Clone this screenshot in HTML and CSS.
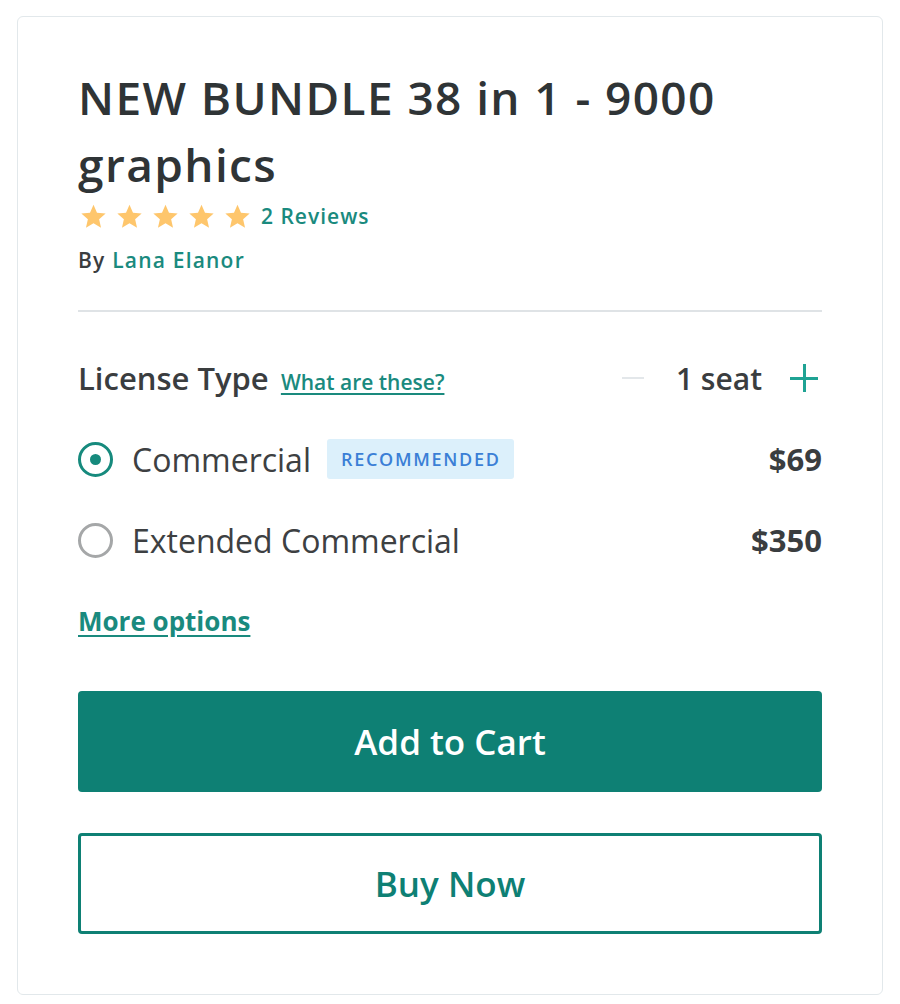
FILE: index.html
```html
<!DOCTYPE html>
<html lang="en">
<head>
    <meta charset="UTF-8">
    <title>NEW BUNDLE 38 in 1 - 9000 graphics</title>
    <link rel="stylesheet" href="styles.css">
</head>
<body>

<div class="product-card">
    <h1 class="title">NEW BUNDLE 38 in 1 - 9000 graphics</h1>

    <div class="rating">
        <div class="stars">
            <svg class="star" viewBox="0 0 24 24"><path d="M12 1.5l3.1 7.1 7.7.7-5.8 5.1 1.7 7.6L12 18l-6.7 4 1.7-7.6-5.8-5.1 7.7-.7z"/></svg>
            <svg class="star" viewBox="0 0 24 24"><path d="M12 1.5l3.1 7.1 7.7.7-5.8 5.1 1.7 7.6L12 18l-6.7 4 1.7-7.6-5.8-5.1 7.7-.7z"/></svg>
            <svg class="star" viewBox="0 0 24 24"><path d="M12 1.5l3.1 7.1 7.7.7-5.8 5.1 1.7 7.6L12 18l-6.7 4 1.7-7.6-5.8-5.1 7.7-.7z"/></svg>
            <svg class="star" viewBox="0 0 24 24"><path d="M12 1.5l3.1 7.1 7.7.7-5.8 5.1 1.7 7.6L12 18l-6.7 4 1.7-7.6-5.8-5.1 7.7-.7z"/></svg>
            <svg class="star" viewBox="0 0 24 24"><path d="M12 1.5l3.1 7.1 7.7.7-5.8 5.1 1.7 7.6L12 18l-6.7 4 1.7-7.6-5.8-5.1 7.7-.7z"/></svg>
        </div>
        <a class="reviews" href="#">2 Reviews</a>
    </div>

    <div class="author">By <a href="#">Lana Elanor</a></div>

    <hr class="divider">

    <div class="license-head">
        <div class="license-label">
            <span>License Type</span>
            <a href="#" class="help-link">What are these?</a>
        </div>
        <div class="seats">
            <span class="seat-btn minus"></span>
            <span class="seat-count">1 seat</span>
            <span class="seat-btn plus"></span>
        </div>
    </div>

    <label class="option">
        <span class="radio checked"></span>
        <span class="option-name">Commercial</span>
        <span class="badge">RECOMMENDED</span>
        <span class="price">$69</span>
    </label>

    <label class="option">
        <span class="radio"></span>
        <span class="option-name">Extended Commercial</span>
        <span class="price">$350</span>
    </label>

    <div class="more">
        <a href="#" class="more-options">More options</a>
    </div>

    <div class="actions">
        <button class="btn btn-cart">Add to Cart</button>
        <button class="btn btn-buy">Buy Now</button>
    </div>
</div>

</body>
</html>
```

FILE: styles.css
```css
body {
    margin: 0;
    background-color: #ffffff;
    font-family: "Open Sans", Lato, sans-serif;
    color: #333638;
}
a {
    color: #1a8a7e;
    text-decoration: none;
}
.product-card {
    margin: 16px 17px 0;
    height: 979px;
    box-sizing: border-box;
    padding: 47px 60px 0;
    border: 1px solid #e2e8eb;
    border-radius: 6px;
}
.title {
    margin: 0;
    font-size: 46px;
    font-weight: 600;
    line-height: 67px;
    letter-spacing: 1.4px;
    color: #2f3436;
}
.rating {
    display: flex;
    align-items: center;
    height: 36px;
}
.stars {
    display: flex;
    gap: 9px;
    margin-left: 2px;
}
.star {
    width: 27px;
    height: 27px;
    fill: #fec66c;
}
.reviews {
    margin-left: 10px;
    font-size: 21px;
    font-weight: 600;
    letter-spacing: 1px;
}
.author {
    margin-top: 13px;
    font-size: 21px;
    line-height: 26px;
    font-weight: 600;
    letter-spacing: 1.2px;
    color: #3a3d3f;
}
.divider {
    margin: 37px 0 0;
    border: none;
    border-top: 2px solid #dfe3e6;
}
.license-head {
    display: flex;
    justify-content: space-between;
    align-items: center;
    height: 48px;
    margin-top: 42px;
}
.license-label span {
    font-size: 31px;
    font-weight: 600;
    color: #3a3d3f;
}
.help-link {
    margin-left: 8px;
    font-size: 21px;
    font-weight: 600;
    text-decoration: underline;
    text-underline-offset: 3px;
}
.seats {
    display: flex;
    align-items: center;
    margin-right: 4px;
}
.seat-btn {
    position: relative;
    width: 28px;
    height: 28px;
}
.seat-btn::before,
.plus::after {
    content: "";
    position: absolute;
    left: 0;
    right: 0;
    top: 13px;
    height: 3px;
    background-color: #1fa394;
}
.minus::before {
    right: 6px;
    height: 2px;
    background-color: #e3e7ea;
}
.plus::after {
    left: 13px;
    right: auto;
    top: 0;
    width: 3px;
    height: 28px;
}
.seat-count {
    margin: 0 28px 0 26px;
    font-size: 30px;
    font-weight: 600;
    color: #3a3d3f;
}
.option {
    display: flex;
    align-items: center;
    height: 48px;
    margin-top: 33px;
    cursor: pointer;
}
.radio {
    box-sizing: border-box;
    width: 35px;
    height: 35px;
    border: 3px solid #a5a7a8;
    border-radius: 50%;
    display: flex;
    justify-content: center;
    align-items: center;
}
.radio.checked {
    border-color: #168a7d;
}
.radio.checked::after {
    content: "";
    width: 11px;
    height: 11px;
    border-radius: 50%;
    background-color: #168a7d;
}
.option-name {
    margin-left: 19px;
    font-size: 32px;
    color: #3d4042;
}
.badge {
    margin-left: 16px;
    padding: 8px 13px 8px 14px;
    border-radius: 3px;
    background-color: #dcf0fb;
    color: #3b7fd6;
    font-size: 18px;
    font-weight: 600;
    letter-spacing: 1.7px;
}
.price {
    margin-left: auto;
    font-size: 31px;
    font-weight: 700;
    color: #3a3d3f;
}
.more {
    margin-top: 42px;
    line-height: 30px;
}
.more-options {
    font-size: 26px;
    font-weight: 700;
    text-decoration: underline;
    text-underline-offset: 4px;
}
.actions {
    display: flex;
    flex-direction: column;
    gap: 41px;
    margin-top: 51px;
}
.btn {
    height: 101px;
    border-radius: 4px;
    font-family: inherit;
    font-size: 35px;
    font-weight: 600;
    cursor: pointer;
}
.btn-cart {
    border: none;
    background-color: #0e8074;
    color: #ffffff;
}
.btn-buy {
    border: 3px solid #0e8074;
    background-color: #ffffff;
    color: #0e8074;
}
```
